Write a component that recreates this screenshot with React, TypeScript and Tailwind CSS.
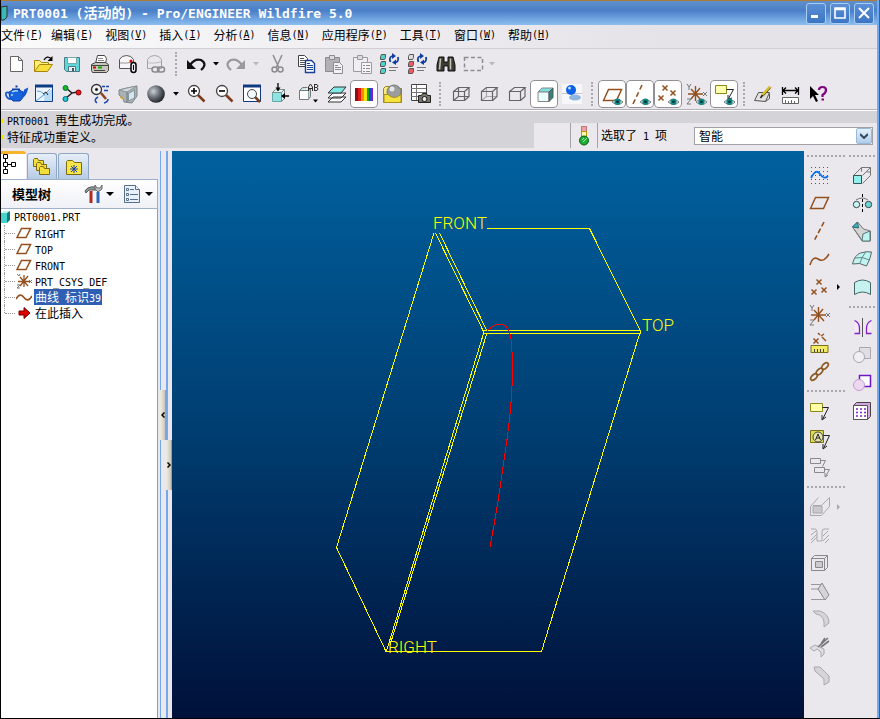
import React from "react";

type Kids = { children?: React.ReactNode };

/* Latin runs are set in a half-width face beside the full-width Chinese glyphs. */
function Mixed({ text, latin = "text-[10px]" }: { text: string; latin?: string }) {
  const parts = text.split(/([\x20-\x7e]+)/).filter(Boolean);
  return (
    <>
      {parts.map((p, i) =>
        /^[\x20-\x7e]+$/.test(p) ? (
          <span key={i} className={`whitespace-pre font-['DejaVu_Sans_Mono','Liberation_Mono',monospace] ${latin}`}>
            {p}
          </span>
        ) : (
          <span key={i}>{p}</span>
        ),
      )}
    </>
  );
}

function Icon({ children }: Kids) {
  return (
    <svg viewBox="0 0 28 28" className="size-7 shrink-0" fill="none" stroke="#444" strokeWidth="1" aria-hidden="true">
      {children}
    </svg>
  );
}

function Tool({ name, pressed, children }: Kids & { name: string; pressed?: boolean }) {
  return (
    <button
      type="button"
      title={name}
      aria-label={name}
      aria-pressed={pressed}
      className={`relative flex size-7 shrink-0 items-center justify-center ${
        pressed ? "rounded-[4px] bg-white outline-1 -outline-offset-1 outline-[#929096]" : ""
      }`}
    >
      <Icon>{children}</Icon>
    </button>
  );
}

function Sep() {
  return (
    <div className="flex h-7 w-3 shrink-0 items-center justify-center">
      <div className="h-6 border-l-2 border-dotted border-[#aaa8ae]" />
    </div>
  );
}

function Drop({ name, dim }: { name: string; dim?: boolean }) {
  return (
    <button type="button" aria-label={name} className="flex h-7 w-3 shrink-0 items-center justify-center">
      <svg viewBox="0 0 6 4" className="h-[4px] w-[6px]" aria-hidden="true">
        <path d="M0 0h6L3 3.5z" fill={dim ? "#b9b7bd" : "#000"} />
      </svg>
    </button>
  );
}

const Eye = () => (
  <g stroke="none">
    <path d="M14 22q5-5 11 0q-5 5-11 0z" fill="#fff" stroke="#777" />
    <circle cx="19.5" cy="21.8" r="3.2" fill="#0b8a86" />
    <circle cx="19.5" cy="21.8" r="1.3" fill="#002c30" />
  </g>
);

const Cross = ({ x, y }: { x: number; y: number }) => (
  <path d={`M${x - 2.5} ${y - 2.5}l5 5M${x + 2.5} ${y - 2.5}l-5 5`} stroke="#93501f" strokeWidth="1.5" />
);

const Clip = () => (
  <g stroke="#8d8b91">
    <path d="M7.500 7.500h14v14h-14z" fill="#b2b0b6" />
    <path d="M11.500 5.500h5v4h-5z" fill="#dddbe0" />
  </g>
);

const Swirl = () => (
  <g stroke="#123f9e" strokeWidth="1.8">
    <path d="M16.500 12q-2-5 2-6M24 7q1 5-3 5.500" />
    <path d="M18 3l4 3-4 3zM22 9.500v5.500l-4-2.500z" fill="#123f9e" stroke="none" />
  </g>
);

const Regen = ({ a, b, c }: { a: string; b: string; c: string }) => (
  <>
    {[a, b, c].map((f, i) => (
      <path key={i} d={`M6.500 ${6.5 + i * 7}l1-2h4v3l-1 2h-4z`} fill={f} stroke="#555" />
    ))}
    <Swirl />
    <path d="M15 17.500h9M15 20.500h7" stroke="#777" />
  </>
);

const Lens = ({ minus, x = 12, y = 11 }: { minus?: boolean; x?: number; y?: number }) => (
  <>
    <path d={`M${x + 4} ${y + 4}l6.500 6.500`} stroke="#7a3b1a" strokeWidth="2.5" />
    <circle cx={x} cy={y} r="5.500" fill="#fff" stroke="#444" strokeWidth="1.300" />
    <path d={minus ? `M${x - 3} ${y}h6` : `M${x - 3} ${y}h6M${x} ${y - 3}v6`} stroke="#000" strokeWidth="1.600" />
  </>
);

function Wire({ hidden, solid }: { hidden?: string; solid?: boolean }) {
  return (
    <g stroke="#66646b" strokeWidth="1.2">
      {!solid && <path d="M12.500 8v8.500h10.500M12.500 16.500l-5 4" stroke={hidden ?? "#66646b"} />}
      <path d="M7.500 11.500h11v9h-11zM7.500 11.500l5-4h10.500l-4.500 4M23 7.500v9l-4.500 4" />
    </g>
  );
}

const Csys = () => (
  <g>
    <path d="M6 14h15M9 9l10 11M18 8l-9 11M13.500 6v15" stroke="#93501f" strokeWidth="1.400" />
    <path d="M5 4l2 3 2-3M7 7v3M21 12l4 4M25 12l-4 4M5 19h4l-4 5h4" stroke="#777" />
  </g>
);

function TopBars() {
  return (
    <div className="overflow-hidden border-b border-[#b4b2b8] border-t-[#d0ced4] border-t bg-[#ebe8ed] py-px">
      <div className="flex pl-px">
        <Tool name="新建"><path d="M8.500 6.500h8l4 4v11h-12zM16.500 6.500v4h4" fill="#fff" stroke="#666" /></Tool>
        <Tool name="打开">
          <path d="M4.500 21V10.500h5l2 2h7v3" fill="#ffef7a" stroke="#a8860c" />
          <path d="M4.500 21.500l5-7h13l-5 7z" fill="#f6de3d" stroke="#a8860c" />
          <path d="M14 10q3-5 7-1.500" stroke="#000" strokeWidth="1.300" />
          <path d="M22.500 6v5h-5z" fill="#000" stroke="none" />
        </Tool>
        <Tool name="保存">
          <path d="M6.500 7.500h15v14h-13l-2-2z" fill="#5fd6da" stroke="#4a7b84" />
          <path d="M9.500 7.500h9v6h-9z" fill="#fff" stroke="#7aa" />
          <path d="M10.500 16.500h7v5h-7z" fill="#eee" stroke="#4a7b84" />
          <path d="M14 18h2v3h-2z" fill="#456" stroke="none" />
        </Tool>
        <Tool name="打印">
          <path d="M9.500 13.500l2-8h7l2 3-1 5z" fill="#fff" />
          <path d="M12 8.500h5M12 10.500h6" stroke="#888" />
          <path d="M5.500 14.500l4-2h10l3 2v6l-2 2h-14l-1-2z" fill="#c8c6b8" />
          <path d="M5.500 15.500h17M8 20.500h11" />
          <path d="M7 17.500h3" stroke="#d00" strokeWidth="2" />
          <path d="M12 17.500h4" stroke="#1a1" strokeWidth="2" />
        </Tool>
        <Tool name="邮件附件">
          <path d="M5.500 18.500v-9q2-4 7-4t7 4v9z" fill="#f6f5f7" stroke="#555" />
          <path d="M6 13h7l6-1" stroke="#999" />
          <circle cx="17" cy="11" r="1.500" fill="#d00" stroke="none" />
          <rect x="17" y="12.500" width="5" height="10" rx="2.500" fill="#ebe8ed" stroke="#000" strokeWidth="1.500" />
          <path d="M19.500 15v5" stroke="#000" />
        </Tool>
        <Tool name="邮件链接">
          <path d="M5.500 18.500v-9q2-4 7-4t7 4v9z" stroke="#a3a1a7" />
          <path d="M6 13h7l6-1" stroke="#bbb" />
          <rect x="10" y="17" width="7" height="5" rx="2.500" stroke="#8a888e" strokeWidth="1.500" fill="#ebe8ed" />
          <rect x="15.500" y="17" width="7" height="5" rx="2.500" stroke="#8a888e" strokeWidth="1.500" />
        </Tool>
        <Sep />
        <Tool name="撤消">
          <path d="M8 15q5-7 11-5q7 4 0 10" stroke="#111" strokeWidth="2.200" />
          <path d="M5 10v9h9z" fill="#111" stroke="none" />
        </Tool>
        <Drop name="撤消列表" />
        <Tool name="重做">
          <path d="M20 15q-5-7-11-5q-7 4 0 10" stroke="#9b999f" strokeWidth="2.200" />
          <path d="M23 10v9h-9z" fill="#9b999f" stroke="none" />
        </Tool>
        <Drop name="重做列表" dim />
        <Tool name="剪切">
          <path d="M11 5l6 13M20 5l-6 13" stroke="#8d8b91" strokeWidth="1.500" />
          <circle cx="12.500" cy="19.500" r="2.500" stroke="#8d8b91" strokeWidth="1.500" />
          <circle cx="18.500" cy="19.500" r="2.500" stroke="#8d8b91" strokeWidth="1.500" />
        </Tool>
        <Tool name="复制">
          <path d="M8.500 5.500h6l3 3v8h-9z" fill="#fff" />
          <path d="M10 8.500h4M10 10.500h6M10 12.500h6M10 14.500h6" stroke="#555" />
          <path d="M15.500 10.500h6l3 3v9h-9z" fill="#fff" stroke="#163f95" strokeWidth="1.400" />
          <path d="M17 13.500h3M17 15.500h6M17 17.500h6M17 19.500h6" stroke="#163f95" />
        </Tool>
        <Tool name="粘贴">
          <Clip />
          <path d="M15.500 12.500h6l3 3v8h-9z" fill="#f2f0f4" stroke="#8d8b91" />
          <path d="M17 15.500h3M17 17.500h6M17 19.500h6" stroke="#8d8b91" />
        </Tool>
        <Tool name="选择性粘贴">
          <path d="M7.500 7.500h14v14h-14z" fill="#f0eef2" stroke="#9c9aa0" />
          <path d="M11.500 5.500h5v4h-5z" fill="#dddbe0" stroke="#9c9aa0" />
          <path d="M15.500 12.500h10v11h-10z" fill="#f5f4f7" stroke="#9c9aa0" />
          <path d="M17 15.500h2M20 15.500h4M17 18.500h2M20 18.500h4M17 21.500h2M20 21.500h4" stroke="#8d8b91" />
        </Tool>
        <Tool name="再生"><Regen a="#4fd0cd" b="#4fd0cd" c="#4fd0cd" /></Tool>
        <Tool name="自定义再生"><Regen a="#ddd" b="#ee5a62" c="#ee5a62" /></Tool>
        <Tool name="查找">
          <path d="M9 7h5v5h4V7h5l2 8v6h-7v-5h-4v5H7v-6z" fill="#3a3a36" stroke="#111" />
          <path d="M10.500 8.500l-1 11M20.500 8.500v11" stroke="#c9c7b4" strokeWidth="1.600" />
        </Tool>
        <Tool name="选取框"><path d="M6.500 7.500h18v13h-18z" stroke="#8d8b91" strokeWidth="1.500" strokeDasharray="4 2.500" /></Tool>
        <Drop name="选取列表" dim />
      </div>
      <div className="mt-0.5 flex pl-px">
        <Tool name="渲染">
          <path d="M7 12q7-5 14 0q1 6-3 9h-7q-5-4-4-9z" fill="#1763dd" stroke="#0a3ba5" />
          <path d="M8 13q-5-2-4 2t5 4M20 14q2 0 3-4l2-1q-1 6-6 9" stroke="#1557cc" strokeWidth="1.800" />
          <path d="M10 9.500h8M13.500 6.500h2" stroke="#0a3ba5" strokeWidth="2" />
          <path d="M10 12q3-2 6-1M10 14v2" stroke="#a8ddff" strokeWidth="1.500" />
        </Tool>
        <Tool name="草绘器">
          <path d="M5.500 5.500h17v16h-17z" fill="#e9f4ff" stroke="#0d3c86" />
          <path d="M5 6h18" stroke="#0d3c86" strokeWidth="3" />
          <path d="M6 21l9-7 5-5M7 11q8 0 10 10" stroke="#5b9fe0" />
          <path d="M15 14l7-5v12h-8z" fill="#b8dcf8" stroke="none" />
          <path d="M13 14l3-2 2 3" stroke="#222" />
        </Tool>
        <Tool name="关系">
          <path d="M8 8l6 5 6-1M14 13l-7 6" stroke="#222" strokeWidth="1.600" />
          <circle cx="7.500" cy="8" r="2.500" fill="#18b618" stroke="#075" />
          <circle cx="20.500" cy="12.500" r="2.500" fill="#f01818" stroke="#700" />
          <circle cx="7.500" cy="19" r="2.500" fill="#20c8d0" stroke="#067" />
        </Tool>
        <Tool name="特征查找">
          <path d="M15 13l5 6" stroke="#8a4520" strokeWidth="2.500" />
          <circle cx="10.500" cy="9.500" r="5" fill="#f4f4f4" stroke="#333" strokeWidth="1.300" />
          <circle cx="10.500" cy="9.500" r="1.200" fill="#000" />
          <path d="M16 6.500h3M20 6.500h3M18 10.500h4M12 17q-5 3-1 6M18 23q4-1 4-4" stroke="#1846b0" strokeWidth="1.500" />
        </Tool>
        <Tool name="外观">
          <path d="M5 10l8-2 10-2v10l-5 7-8-1-1-4-4-3z" fill="#a9b3b7" stroke="#7c8689" />
          <path d="M5 10l8 2 10-6-10 2z" fill="#d3dadc" stroke="#8c9699" />
          <path d="M13 12v10" stroke="#6c7679" />
          <path d="M14.500 13.500l6-3.500v8l-6 3z" fill="#d5e6ee" stroke="#84949b" />
          <path d="M6 17l4 2" stroke="#d1a43a" strokeWidth="1.500" />
        </Tool>
        <Tool name="着色球">
          <defs>
            <radialGradient id="ball" cx="0.350" cy="0.350" r="0.700">
              <stop offset="0" stopColor="#cdd1d6" />
              <stop offset="0.500" stopColor="#6a7078" />
              <stop offset="1" stopColor="#1f2226" />
            </radialGradient>
          </defs>
          <circle cx="14" cy="14" r="8.800" fill="url(#ball)" stroke="none" />
        </Tool>
        <Drop name="外观列表" />
        <Tool name="放大"><Lens /></Tool>
        <Tool name="缩小"><Lens minus /></Tool>
        <Tool name="重新调整">
          <path d="M5.500 5.500h17v16h-17z" fill="#fff" stroke="#103a80" />
          <path d="M5 6h18" stroke="#103a80" strokeWidth="3" />
          <path d="M17 17l5 5" stroke="#7a3b1a" strokeWidth="2.500" />
          <circle cx="14" cy="14" r="4.500" fill="#f2fafd" stroke="#444" />
        </Tool>
        <Tool name="重定向">
          <path d="M6.500 12.500h9v9h-9z" fill="#8fe3e2" stroke="#6aa" />
          <path d="M6.500 12.500l3-3h9l-3 3zM18.500 9.500v9l-3 3v-9z" fill="#e5f6f6" stroke="#7a8c8c" />
          <path d="M12 3v8M23 16h-6" stroke="#000" strokeWidth="1.300" />
          <path d="M9.500 7.500h5L12 11zM19 13v6l-4-3z" fill="#000" stroke="none" />
        </Tool>
        <Tool name="视图列表">
          <path d="M5.500 10.500h9v9h-9z" fill="#fff" stroke="#777" />
          <path d="M5.500 10.500l3-3h5M14.500 10.500l2-2v8l-2 3" fill="#9de4e2" stroke="#777" />
          <path d="M14.500 11V7l2-3 2 3v4M14.500 8.500h4M20.500 4v7M20 4.500h3l1 1.500-1 1.500h-3M23 7.500l1 1.500-1 1.500h-3" stroke="#333" />
          <path d="M19 19.500h5l-2.500 3z" fill="#000" stroke="none" />
        </Tool>
        <Tool name="层">
          <path d="M6 22l5-5h13l-5 5zM6 18l5-5h13l-5 5z" fill="#fff" stroke="#333" />
          <path d="M6 13l6-6h12l-5 6z" fill="#7fe9e6" stroke="#333" />
        </Tool>
        <Tool name="颜色" pressed>
          <g stroke="none">
            <path d="M5 8h3v13H5z" fill="#8c1010" /><path d="M8 8h3v13H8z" fill="#e01818" />
            <path d="M11 8h3v13h-3z" fill="#ff8a00" /><path d="M14 8h3v13h-3z" fill="#f0e60a" />
            <path d="M17 8h2v13h-2z" fill="#12a51c" /><path d="M19 8h2v13h-2z" fill="#1c46d8" />
            <path d="M21 8h2v13h-2z" fill="#8a1cc0" />
          </g>
        </Tool>
        <Tool name="外观库">
          <path d="M5.500 22.500V8.500l2-2h4l1 2h11v14z" fill="#f8ea80" stroke="#9b8414" />
          <circle cx="16" cy="12" r="7" fill="#9a9c9e" stroke="#777" />
          <circle cx="14" cy="9" r="2.500" fill="#e4e6e8" stroke="none" />
          <path d="M6 14.500h4q6 6 13 0v8h-17z" fill="#f6e23e" stroke="#a8921c" />
        </Tool>
        <Tool name="视图快照">
          <path d="M5.500 4.500h15v16h-15z" fill="#fff" />
          <path d="M5 8.500h15M5 12.500h15M5 16.500h15M10.500 5v15" stroke="#777" />
          <path d="M12.500 15.500h3l1-2h4l1 2h3v7h-12z" fill="#77776c" stroke="#222" />
          <circle cx="18.500" cy="19" r="2.500" fill="#eee" stroke="#111" />
        </Tool>
        <Sep />
        <Tool name="线框"><Wire /></Tool>
        <Tool name="隐藏线"><Wire hidden="#aaa8ae" /></Tool>
        <Tool name="无隐藏线"><Wire solid /></Tool>
        <Tool name="着色" pressed>
          <path d="M8 12l4-4h11l-4 4z" fill="#7be3e1" stroke="#888" />
          <path d="M8 12h11v9.500H8z" fill="#eafcfc" stroke="#888" />
          <path d="M19 12l4-4v9.500l-4 4z" fill="#3a8080" stroke="#555" />
        </Tool>
        <Tool name="增强的真实感">
          <path d="M4 4h20v20H4z" fill="#f7f6f9" stroke="none" />
          <path d="M4 13.500h20" stroke="#c8c6cc" />
          <ellipse cx="17" cy="17.500" rx="6" ry="3" fill="#8fb6dc" stroke="none" />
          <circle cx="13" cy="10" r="5" fill="#0b62e8" stroke="none" />
          <circle cx="11.500" cy="8" r="1.500" fill="#b4dcff" stroke="none" />
        </Tool>
        <Sep />
        <Tool name="平面显示" pressed><path d="M5.500 20.500l5-11h13l-5 11z" stroke="#93501f" strokeWidth="1.500" /><Eye /></Tool>
        <Tool name="轴显示" pressed><path d="M16 5L7 24" stroke="#93501f" strokeWidth="1.600" strokeDasharray="5 3" /><Eye /></Tool>
        <Tool name="点显示" pressed><Cross x={11} y={8} /><Cross x={19} y={13} /><Cross x={7} y={18} /><Eye /></Tool>
        <Tool name="坐标系显示"><Csys /><Eye /></Tool>
        <Tool name="注释显示" pressed>
          <path d="M5.500 5.500h11v8h-11z" fill="#ffffb0" stroke="#8a8a18" />
          <path d="M16.500 9.500h7l-5 9M18 15v4l4-1" stroke="#222" /><Eye />
        </Tool>
        <Sep />
        <Tool name="草绘注释">
          <path d="M4.500 20.500l4-8h11l-4 9z" fill="#e3e1e0" stroke="#555" />
          <path d="M15.500 21.500l4-3v-5" stroke="#555" />
          <path d="M12 15.500l8-9" stroke="#d8bf2a" strokeWidth="2.500" />
          <path d="M13 16.500l8-9" stroke="#6b5a10" />
          <path d="M10.500 18l2-3" stroke="#222" strokeWidth="1.500" />
        </Tool>
        <Tool name="测量">
          <path d="M4.500 7v8M20.500 7v8M5 10.500h15M8 7.500l-3 3 3 3M17 7.500l3 3-3 3" stroke="#000" strokeWidth="1.300" />
          <path d="M4.500 17.500h16v6h-16z" fill="#fff" stroke="#666" />
          <path d="M7.500 20v3M10.500 21v2M13.500 20v3M16.500 21v2" stroke="#666" />
        </Tool>
        <Tool name="上下文帮助">
          <path d="M4 6v13l3-3 3 6 2-1-3-6h4z" fill="#000" stroke="none" />
          <path d="M13 10q0-3 3.500-3t3.500 3-3.500 5v2" stroke="#800080" strokeWidth="2.200" />
          <path d="M15.500 18.500h2.500v2h-2.500z" fill="#800080" stroke="none" />
        </Tool>
      </div>
    </div>
  );
}

function TitleBar() {
  const box = "flex h-[21px] w-5 items-center justify-center rounded-[3px] border border-[#a9cdf3] bg-linear-to-b from-[#5b8fd4] to-[#3c75c4]";
  return (
    <header className="flex h-[25px] items-center border-t border-[#b07c35] bg-linear-to-b from-[#6090cc] via-[#4a7fc8] via-40% to-[#8cbef0]">
      <svg viewBox="0 0 8 16" className="h-4 w-2" aria-hidden="true">
        <path d="M0 2l6-1v11l-3 3H0z" fill="#3bb7b4" stroke="#333" />
      </svg>
      <h1 className="ml-1 flex-1 font-bold whitespace-nowrap text-white text-[14px] leading-5">
        <Mixed text="PRT0001 (活动的) - Pro/ENGINEER Wildfire 5.0" latin="text-[13px]" />
      </h1>
      <div className="flex gap-[4px] pr-[3px] text-white">
        <button type="button" aria-label="最小化" className={box}>
          <svg viewBox="0 0 12 12" className="size-3" aria-hidden="true"><path d="M1 9.500h7" stroke="#fff" strokeWidth="3" /></svg>
        </button>
        <button type="button" aria-label="最大化" className={box}>
          <svg viewBox="0 0 12 12" className="size-3" aria-hidden="true"><path d="M1 1h10v10H1zM1 2.500h10" fill="none" stroke="#fff" strokeWidth="1.600" /></svg>
        </button>
        <button type="button" aria-label="关闭" className={box}>
          <svg viewBox="0 0 12 12" className="size-3" aria-hidden="true"><path d="M1 1l10 10M11 1L1 11" stroke="#fff" strokeWidth="2" /></svg>
        </button>
      </div>
    </header>
  );
}

const menus: [string, string][] = [
  ["文件", "F"], ["编辑", "E"], ["视图", "V"], ["插入", "I"], ["分析", "A"],
  ["信息", "N"], ["应用程序", "P"], ["工具", "T"], ["窗口", "W"], ["帮助", "H"],
];

function MenuBar() {
  return (
    <nav className="flex h-[23px] items-center gap-3 bg-linear-to-r from-[#fafafb] to-[#e6e3e8] to-75% pb-1">
      {menus.map(([label, key], i) => (
        <button key={key} type="button" className={`flex items-center whitespace-nowrap ${i === 0 ? "-mr-1" : ""}`}>
          {label}
          <span className="font-['DejaVu_Sans_Mono',monospace] text-[10px]">(<u>{key}</u>)</span>
        </button>
      ))}
    </nav>
  );
}

function Messages() {
  return (
    <div className="flex h-[41px] items-start border-t border-white bg-[#ebe8ed]">
      <div className="h-[37px] flex-1 bg-[#d4d3d8] pt-[2px]">
        <p className="flex h-4 items-center"><i className="mr-1 h-1 w-0.5 bg-[#e8e800]" /><span className="leading-4"><Mixed text="PRT0001 再生成功完成。" /></span></p>
        <p className="flex h-4 items-center leading-4"><i className="mr-1 h-1 w-0.5 bg-[#e8e800]" />特征成功重定义。</p>
      </div>
      <div className="flex h-[37px] w-[343px] flex-col">
        <div className="h-3 bg-[#d4d3d8]" />
        <div className="flex flex-1 items-center">
          <div className="h-full w-9" />
          <div className="flex h-full w-7 items-center justify-center border-x border-[#a5a3a9]">
            <svg viewBox="0 0 12 20" className="h-5 w-3" aria-hidden="true">
              <path d="M3.500.5h5v5h-5z" fill="#f0a0a0" stroke="#b77" />
              <path d="M3.500 5.500h5v5h-5z" fill="#fdfbb0" stroke="#a90" />
              <circle cx="6" cy="14.500" r="4.500" fill="#1fae35" stroke="#0a5a16" />
              <path d="M4 14l2-2M5 16l4-4" stroke="#a0f0a8" />
            </svg>
          </div>
          <output className="ml-[3px] w-[93px] whitespace-nowrap"><Mixed text="选取了 1 项" /></output>
          <div className="relative mr-1 h-[18px] flex-1">
            <select aria-label="选取过滤器" className="block h-full w-full appearance-none border border-[#a0a0a8] bg-white pl-1 text-xs leading-4">
              <option>智能</option>
            </select>
            <span className="pointer-events-none absolute inset-y-px right-px flex w-4 items-center justify-center rounded-[2px] border border-[#9cb8d8] bg-linear-to-b from-[#e4f0fb] to-[#b0cdea]">
              <svg viewBox="0 0 8 6" className="h-1.5 w-2" aria-hidden="true"><path d="M0 1l4 4 4-4" fill="none" stroke="#33475f" strokeWidth="2" /></svg>
            </span>
          </div>
        </div>
      </div>
    </div>
  );
}

const Plane = () => <path d="M1 12.500l4.500-9h9l-4.500 9z" fill="none" stroke="#93501f" strokeWidth="1.500" />;
const Folder = ({ x, y }: { x: number; y: number }) => (
  <path d={`M${x} ${y + 8}v-7l1-1h3l1 2h5v6z`} fill="#f3df3b" stroke="#7c6a14" />
);

const rows: { label: string; icon: React.ReactNode; selected?: boolean }[] = [
  { label: "RIGHT", icon: <Plane /> },
  { label: "TOP", icon: <Plane /> },
  { label: "FRONT", icon: <Plane /> },
  {
    label: "PRT_CSYS_DEF",
    icon: (
      <g fill="none">
        <path d="M2 8.500h12M4 4l8 9M12 3l-8 10M8 2v12" stroke="#93501f" strokeWidth="1.300" />
        <path d="M1 1l2 2 1-2M13 7l3 3M16 7l-3 3M1 12h3l-3 3h3" stroke="#777" />
      </g>
    ),
  },
  { label: "曲线 标识39", selected: true, icon: <path d="M0 10q4-7 8-1.500t8-1.500" fill="none" stroke="#93501f" strokeWidth="1.600" /> },
  { label: "在此插入", icon: <path d="M3 6h5V2.500l6 5.500-6 5.500V10H3z" fill="#e00000" stroke="#700" /> },
];

function ModelTree() {
  const tab = "flex h-[26px] items-center justify-center rounded-t-[3px] border border-b-0 border-[#8fa6c4] bg-linear-to-b from-[#e7eff9] to-[#b6cbe6]";
  return (
    <aside className="flex w-[157px] shrink-0 flex-col">
      <div role="tablist" className="flex h-7 items-end gap-px">
        <button role="tab" aria-selected="true" aria-label="模型树" type="button" className="flex h-7 w-[25px] items-start rounded-tr-[3px] border-t-[3px] border-[#f5b52c] bg-white">
          <svg viewBox="0 0 16 20" className="h-5 w-4" fill="#fff" stroke="#000" aria-hidden="true">
            <path d="M4.500 5v3M4.500 12v3M7 10.500h4" />
            <path d="M2.500.5h4v4h-4zM2.500 8.500h4v4h-4zM2.500 15.500h4v4h-4zM10.500 8.500h4v4h-4z" />
          </svg>
        </button>
        <button role="tab" aria-selected="false" aria-label="文件夹浏览器" type="button" className={`${tab} w-[30px]`}>
          <svg viewBox="0 0 20 20" className="size-5" aria-hidden="true"><Folder x={1.5} y={1.5} /><Folder x={4.5} y={5.5} /><Folder x={7.5} y={9.5} /></svg>
        </button>
        <button role="tab" aria-selected="false" aria-label="收藏夹" type="button" className={`${tab} w-[31px]`}>
          <svg viewBox="0 0 20 20" className="size-5" aria-hidden="true">
            <path d="M2.500 17.500V4.500l1-1h5l2 2h7v12z" fill="#f8e648" stroke="#7c6a14" />
            <path d="M10 8v8M6 12h8M7 9l6 6M13 9l-6 6" stroke="#1a3fb0" />
          </svg>
        </button>
      </div>
      <div className="flex h-[30px] items-center border-y border-r border-[#9db1cc] bg-linear-to-b from-[#ffffff] to-[#eff1f6] pl-[11px]">
        <h2 className="flex-1 text-[13px] font-bold">模型树</h2>
        <button type="button" aria-label="设置" className="flex items-center gap-0.5">
          <svg viewBox="0 0 20 20" className="size-5" aria-hidden="true">
            <path d="M7 7v12" stroke="#b02a20" strokeWidth="3" />
            <path d="M1 7q3-5 10-4l2 3H5l-3 3z" fill="#8f989c" stroke="#555" />
            <path d="M14 8v11" stroke="#2b66b8" strokeWidth="3" />
            <path d="M11 1v4l3 3 4-3V1l-2 3h-3z" fill="#b8c0c4" stroke="#666" />
          </svg>
          <svg viewBox="0 0 8 4" className="h-1 w-2" aria-hidden="true"><path d="M0 0h8L4 4z" /></svg>
        </button>
        <button type="button" aria-label="显示" className="mr-1 ml-2 flex items-center gap-[3px]">
          <svg viewBox="0 0 20 20" className="size-5" fill="#e8f1f9" stroke="#56708c" aria-hidden="true">
            <path d="M2.500 1.500h11l4 4v13h-15z" />
            <path d="M13.500 1.500v4h4M8 5.500h4M8 10.500h8M8 15.500h8" />
            <path d="M4.500 4.500h2v2h-2zM4.500 9.500h2v2h-2zM4.500 14.500h2v2h-2z" fill="#fff" />
          </svg>
          <svg viewBox="0 0 8 4" className="h-1 w-2" aria-hidden="true"><path d="M0 0h8L4 4z" /></svg>
        </button>
      </div>
      <div className="flex-1 border-r border-[#9a9aa0] bg-white">
        <div className="flex h-4 items-center gap-1 whitespace-nowrap">
          <svg viewBox="0 0 9 14" className="h-3.5 w-[9px]" aria-hidden="true">
            <path d="M0 3h6v10H0z" fill="#45d3ce" /><path d="M0 3l3-2h6L6 3z" fill="#bff3f0" /><path d="M6 3l3-2v9l-3 3z" fill="#1b7773" />
          </svg>
          <span className="leading-4"><Mixed text="PRT0001.PRT" /></span>
        </div>
        <ul className="ml-[3px]">
          {rows.map((r, i) => (
            <li key={r.label} className="flex h-4 items-center whitespace-nowrap">
              <span className={`self-start border-l border-dotted border-[#999] ${i === rows.length - 1 ? "h-2" : "h-4"}`} />
              <span className="mr-px w-[10px] border-t border-dotted border-[#999]" />
              <svg viewBox="0 0 16 16" className="mr-0.5 size-4" aria-hidden="true">{r.icon}</svg>
              <span className={`h-4 px-px leading-4 ${r.selected ? "bg-[#2f5fb3] text-white" : ""}`}><Mixed text={r.label} /></span>
            </li>
          ))}
        </ul>
      </div>
    </aside>
  );
}

function Splitters() {
  const handle = "flex h-[50px] w-1.5 items-center justify-center border-r border-[#a39f90] bg-linear-to-r from-[#f0ede4] to-[#cbc7ba]";
  return (
    <div className="ml-0.5 flex shrink-0">
      <div className="flex w-1.5 flex-col border-l border-[#74a8ea] pt-[239px]">
        <button type="button" aria-label="折叠模型树" className={`-ml-px ${handle}`}>
          <svg viewBox="0 0 4 6" className="h-1.5 w-1 shrink-0" aria-hidden="true"><path d="M3.500.5L1 3l2.500 2.500" fill="none" stroke="#000" strokeWidth="1.500" /></svg>
        </button>
      </div>
      <div className="flex w-1.5 flex-col border-l-2 border-[#74a8ea] pt-[289px]">
        <button type="button" aria-label="展开浏览器" className={`-ml-0.5 ${handle}`}>
          <svg viewBox="0 0 4 6" className="h-1.5 w-1 shrink-0" aria-hidden="true"><path d="M.5.5L3 3 .5 5.500" fill="none" stroke="#000" strokeWidth="1.500" /></svg>
        </button>
      </div>
    </div>
  );
}

function Viewport() {
  return (
    <main className="relative min-w-0 flex-1 bg-linear-to-b from-[#00619f] via-[#003d70] via-50% to-[#00113a]">
      <svg viewBox="172 151 632 567" className="absolute inset-0 h-full w-full" fill="none" stroke="#ffff00" role="img" aria-label="基准平面">
        <g shapeRendering="crispEdges">
          <path d="M487 228.500H589.500L640.500 331L541.500 651.500H386L336.500 547.500L434 233" />
          <path d="M435.500 233L484 332.500M439.500 233L487 331" />
          <path d="M484 330.500H640M484 333.500H640.500" />
          <path d="M484 332L386.500 651M487 333L390 645" />
          <path d="M487 331Q494 324 501 324Q509 325 511 339Q516 385 504 460Q498 505 490 547" stroke="#ff0000" />
        </g>
        <g fill="#ffff00" stroke="none" fontSize="17" fontWeight="300" fontFamily="Roboto, 'Liberation Sans', sans-serif">
          <text x="433" y="229">FRONT</text>
          <text x="642" y="331">TOP</text>
          <text x="388" y="653">RIGHT</text>
        </g>
      </svg>
    </main>
  );
}

const HSep = ({ first }: { first?: boolean }) => (
  <div className={`flex w-full items-center ${first ? "h-2.5" : "h-3"}`}>
    <div className="w-full border-t-2 border-dotted border-[#aaa8ae]" />
  </div>
);

const g = "#a9a7ad";

function RightBars() {
  return (
    <div className="flex shrink-0 gap-1 pr-0.5 pl-[3px]">
      <div className="w-[38px]">
        <HSep first />
        <div className="flex w-6 flex-col items-center">
          <Tool name="草绘">
            <g stroke="#2d56c0" strokeDasharray="1 3"><path d="M6 6.500h18M6 10.500h18M6 14.500h18M6 18.500h18M6 22.500h18" /></g>
            <path d="M6 17q5-10 9-4t8 2" stroke="#0a70e8" strokeWidth="1.800" />
          </Tool>
          <Tool name="平面"><path d="M5.500 19.500l5-11h13l-5 11z" stroke="#93501f" strokeWidth="1.500" /></Tool>
          <Tool name="轴"><path d="M19 5L9 24" stroke="#93501f" strokeWidth="1.600" strokeDasharray="5 2.500" /></Tool>
          <Tool name="曲线"><path d="M5 20q3-10 9-5.500q5 3 10-5.500" stroke="#93501f" strokeWidth="1.600" /></Tool>
          <div className="flex w-full items-center">
            <div className="-ml-0.5"><Tool name="点"><Cross x={14} y={9} /><Cross x={19} y={17} /><Cross x={9} y={19} /></Tool></div>
            <button type="button" aria-label="点类型" className="ml-1 shrink-0">
              <svg viewBox="0 0 4 8" className="h-2 w-1" aria-hidden="true"><path d="M0 1l3 3-3 3z" /></svg>
            </button>
          </div>
          <Tool name="坐标系"><Csys /></Tool>
          <Tool name="分析点">
            <Cross x={11} y={12} /><path d="M13 4l2 2M17 8l4 4M19 5l-3 2" stroke="#93501f" strokeWidth="1.500" />
            <path d="M6 16.500h17v7H6z" fill="#f2ea62" stroke="#77701a" /><path d="M9.500 20v3M12.500 20v3M15.500 20v3M18.500 20v3" />
          </Tool>
          <Tool name="参照">
            <g stroke="#8a5a20" strokeWidth="1.700">
              <ellipse cx="9" cy="20" rx="4" ry="2.300" transform="rotate(-45 9 20)" />
              <ellipse cx="14.500" cy="14.500" rx="4" ry="2.300" transform="rotate(-45 14.500 14.500)" />
              <ellipse cx="20" cy="9" rx="4" ry="2.300" transform="rotate(-45 20 9)" />
            </g>
          </Tool>
        </div>
        <HSep />
        <div className="flex w-6 flex-col items-center">
          <Tool name="注释"><path d="M5.500 6.500h12v8h-12z" fill="#ffffa8" stroke="#8a8a18" /><path d="M17.500 10.500h6l-6 12M17 18v5l4-3" stroke="#222" /></Tool>
          <Tool name="基准目标">
            <path d="M5.500 5.500h13v12h-13z" fill="#dddc54" stroke="#77701a" /><circle cx="13" cy="12" r="5" fill="#e8e6b0" />
            <path d="M10.500 15l2.500-6 2.500 6M11.500 13h3M18.500 10.500h6l-6 13M18 19v5l4-3" stroke="#222" />
          </Tool>
          <Tool name="传播注释"><path d="M5.500 5.500h10v5h-10zM9.500 14.500h10v5h-10zM15.500 7.500h5l-3 6M19.500 16.500h5l-4 7M20 20v4l3-2" stroke="#8a888e" /></Tool>
        </div>
        <HSep />
        <div className="flex w-6 flex-col items-center">
          <div className="flex w-full items-center">
            <div className="-ml-0.5"><Tool name="孔组"><path d="M5.500 13.500l8-9M5.500 13.500v9h11l8-9v-9l-8 8h-8v8" stroke={g} /><path d="M8 13h9v7H8z" fill="#cbc9cf" stroke={g} /></Tool></div>
            <button type="button" aria-label="更多孔" className="ml-1 shrink-0">
              <svg viewBox="0 0 4 8" className="h-2 w-1" aria-hidden="true"><path d="M0 1l3 3-3 3z" fill={g} /></svg>
            </button>
          </div>
          <Tool name="孔"><path d="M6 8h4q2 0 2 3v9h5v-9q0-3 2-3h5M6 14l5-4M6 19l6-6M6 22l6-6M18 15l5-5M18 20l6-6M20 22l4-4" stroke={g} /></Tool>
          <Tool name="壳"><path d="M6.500 9.500l3-3h13v12l-3 3h-13zM6.500 9.500h13v12M19.500 9.500l3-3" stroke="#8a888e" /><path d="M10.500 12.500h7v6h-7z" fill="#cbc9cf" stroke="#8a888e" /></Tool>
          <Tool name="筋"><path d="M6 12h8M6 7.500h10M6 22.500h13" stroke="#9a989e" /><path d="M13 12l4-6 7 12-4 5z" fill="#d6d4da" stroke="#8a888e" /></Tool>
          <Tool name="倒圆角"><path d="M8 6h7q9 3 9 12l-5 4v-5q-1-7-8-8z" fill="#d6d4da" stroke={g} /></Tool>
          <Tool name="自动倒圆角"><path d="M5 15l5-3 9 4v5l-3 3v-5l-4-3-3 2z" fill="#e0dee4" stroke={g} /><path d="M13 14L23 5M16 14l8-6M20 5l-4 6" stroke="#77757b" strokeWidth="1.600" /></Tool>
          <Tool name="倒角"><path d="M9 6h6l9 9v6l-5 3v-6l-9-8z" fill="#d6d4da" stroke={g} /></Tool>
        </div>
      </div>
      <div className="w-[26px]">
        <HSep first />
        <div className="flex w-[26px] flex-col items-center">
          <Tool name="拉伸"><path d="M5.500 14.500l8-8h9v8l-8 8" stroke="#777" /><path d="M14.500 14.500l8-8M13.500 6.500v4M22.500 11h-4" stroke="#777" /><path d="M5.500 14.500h8v8h-8z" fill="#8ff0ee" stroke="#355" /></Tool>
          <Tool name="旋转"><path d="M14.500 5v19" stroke="#000" strokeDasharray="3 2" /><path d="M8 11q6-4 12 0" stroke="#777" /><circle cx="8.500" cy="15.500" r="3.200" fill="#c5f5f3" /><circle cx="20.500" cy="15.500" r="3.200" fill="#68d8d5" /></Tool>
          <Tool name="可变剖面扫描"><path d="M4.500 10l5-5 6 7 7 2v10h-8z" fill="#d3d5d5" stroke="#777" /><path d="M4.500 10l5-5 1 6z" fill="#36b9b7" stroke="#367" /><path d="M15 17l7-3v10h-8z" fill="#bff3f1" stroke="#577" /><path d="M6 12l8 12" stroke="#777" /></Tool>
          <Tool name="边界混合"><path d="M4.500 19q2-9 8-11 7-2 11-1-1 7-5 14-7-4-14-2z" fill="#c0f4f2" stroke="#566" /><path d="M18 6.500q-4 5-6.500 12.500M7 13q7-2 14.500 2" stroke="#688" /></Tool>
          <Tool name="填充曲面"><path d="M6.500 21.500v-12q8-5 16 0v12q-8-5-16 0z" fill="#c5f2ef" stroke="#466" /></Tool>
        </div>
        <HSep />
        <div className="flex w-[26px] flex-col items-center">
          <Tool name="镜像"><path d="M14.500 5v19" stroke="#555" /><path d="M6.500 7.500q5 2 5 8v5h-5M23.500 7.500q-5 2-5 8v5h5" stroke="#8222c8" strokeWidth="1.300" fill="#f4e8fa" /></Tool>
          <Tool name="合并"><path d="M11.500 6.500h11v11h-11z" fill="#e0dee4" stroke={g} /><circle cx="11" cy="16" r="5.500" fill="#f1eff3" stroke={g} /></Tool>
          <Tool name="修剪"><path d="M11.500 6.500h11v11h-11z" fill="#fff" stroke="#6b17c4" strokeWidth="1.500" /><circle cx="11" cy="16" r="5.500" fill="#ecd9f0" stroke="#c79ad4" /></Tool>
          <Tool name="阵列"><path d="M5.500 8.500l3-3h14v14l-3 3h-14z" fill="#d3a6e2" stroke="#444" /><path d="M5.500 8.500h14v14h-14z" fill="#fff" stroke="#555" /><path d="M8 12h10M8 15.500h10M8 19h10" stroke="#8222c8" strokeWidth="1.500" strokeDasharray="2 2" /></Tool>
        </div>
      </div>
    </div>
  );
}

export default function App() {
  return (
    <div className="flex min-h-screen flex-col overflow-hidden border-r border-b border-r-[#7b5136] border-b-black bg-[#ebe8ed] font-['Noto_Sans_CJK_SC','Liberation_Sans',sans-serif] text-xs text-black">
      <div className="flex flex-1 flex-col border-r-2 border-l border-r-[#70aaf0] border-l-black">
        <TitleBar />
        <MenuBar />
        <TopBars />
        <Messages />
        <div className="flex flex-1">
          <ModelTree />
          <Splitters />
          <Viewport />
          <RightBars />
        </div>
      </div>
    </div>
  );
}
